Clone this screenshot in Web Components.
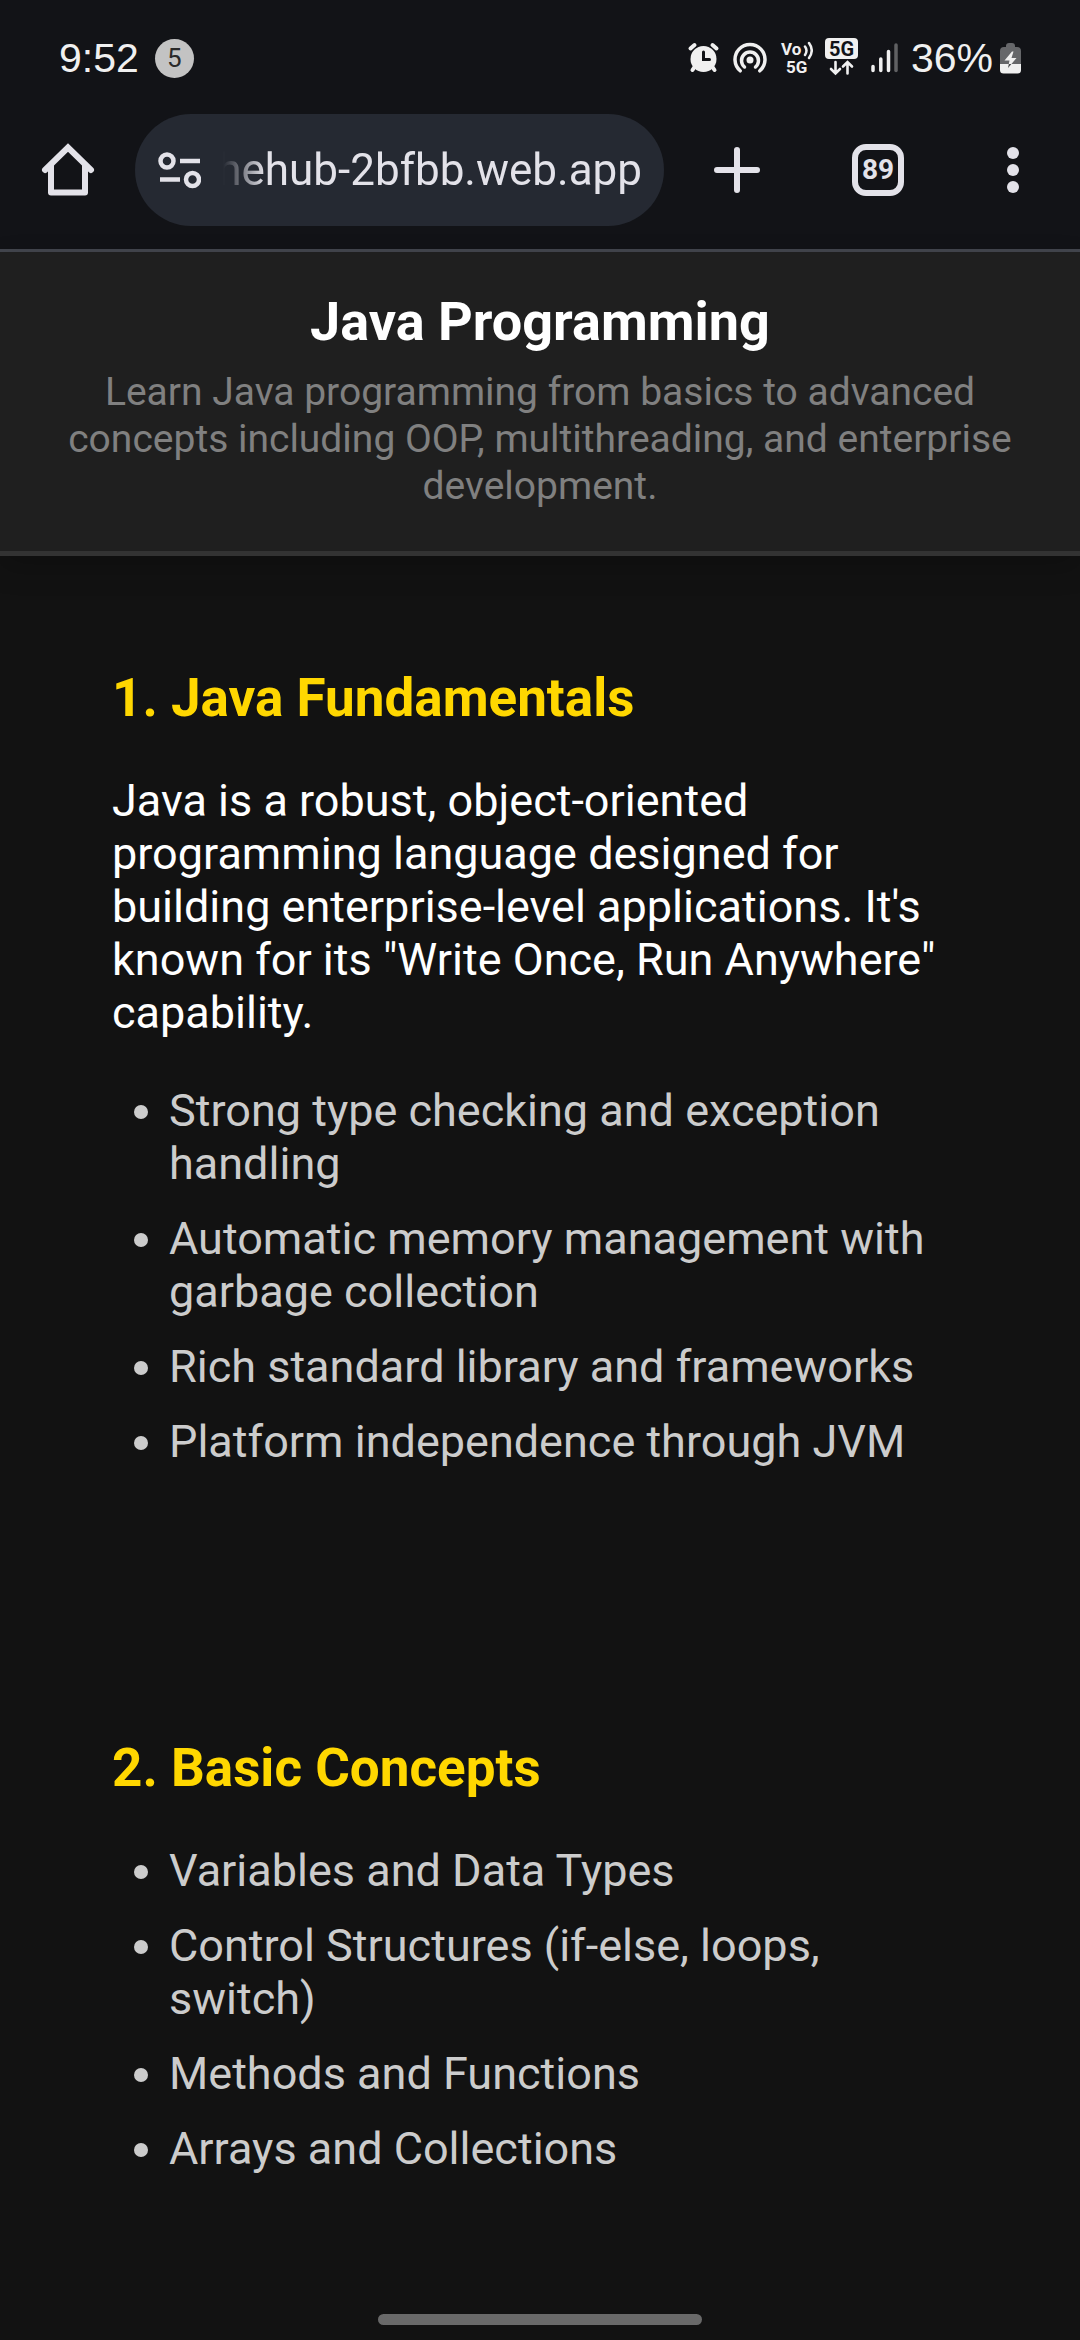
<!DOCTYPE html>
<html lang="en">
<head>
<meta charset="utf-8">
<meta name="viewport" content="width=device-width">
<title>Java Programming</title>
<style>
  html, body { margin: 0; background: #121212; }
  body { font-family: Roboto, "Liberation Sans", sans-serif; color: #fff; }
</style>
</head>
<body>
<phone-shell>
  <status-bar slot="top" time="9:52" count="5" battery="36%"></status-bar>
  <browser-toolbar slot="top" url="hehub-2bfbb.web.app" tabs="89"></browser-toolbar>
  <course-header>
    <span slot="title">Java Programming</span>
    <span slot="summary">Learn Java programming from basics to advanced concepts including OOP, multithreading, and enterprise development.</span>
  </course-header>
  <course-section>
    <span slot="title">1. Java Fundamentals</span>
    <course-text>Java is a robust, object-oriented programming language designed for building enterprise-level applications. It's known for its "Write Once, Run Anywhere" capability.</course-text>
    <topic-list items="Strong type checking and exception handling|Automatic memory management with garbage collection|Rich standard library and frameworks|Platform independence through JVM"></topic-list>
  </course-section>
  <course-section>
    <span slot="title">2. Basic Concepts</span>
    <topic-list items="Variables and Data Types|Control Structures (if-else, loops, switch)|Methods and Functions|Arrays and Collections"></topic-list>
  </course-section>
</phone-shell>

<script>
class BaseElement extends HTMLElement {
  connectedCallback() {
    if (this.shadowRoot) return;
    this.attachShadow({ mode: 'open' }).innerHTML = this.view();
  }
}

customElements.define('phone-shell', class extends BaseElement {
  view() {
    return `
    <style>
      :host { display: flex; flex-direction: column; min-height: 100vh; background: #121212; }
      /* The gesture handle floats over the scrolling page. */
      .handle { position: fixed; left: 35%; right: 35%; bottom: 15px; height: 11px; border-radius: 6px; background: #696969; }
    </style>
    <slot name="top"></slot>
    <main><slot></slot></main>
    <div class="handle"></div>`;
  }
});

customElements.define('status-bar', class extends BaseElement {
  view() {
    return `
    <style>
      :host { display: flex; align-items: center; justify-content: space-between; height: 106px; padding: 10px 59px 0; box-sizing: border-box; background: #121317; color: #f0f0f0; font: 41px/48px "Liberation Sans", sans-serif; }
      .group { display: flex; align-items: center; gap: 12px; }
      .lead { gap: 16px; }
      .power { display: flex; align-items: center; gap: 7px; }
      .badge { width: 39px; height: 39px; border-radius: 50%; background: #c3c3c3; color: #2a2a2a; font: 26px/39px Roboto, sans-serif; text-align: center; }
      svg { display: block; font-family: Roboto, sans-serif; font-weight: 700; }
    </style>
    <div class="group lead"><span>${this.getAttribute('time')}</span><span class="badge">${this.getAttribute('count')}</span></div>
    <div class="group">
      <svg width="33" height="40" viewBox="0 0 33 40" fill="none" stroke="#f0f0f0" stroke-linecap="round">
        <circle cx="16.500" cy="21" r="13" fill="#f0f0f0" stroke="none"/>
        <path d="M3.500 10.500 7.500 7M29.500 10.500 25.500 7M7.500 29 5.500 32M25.500 29 27.500 32" stroke-width="4"/>
        <path d="M16.500 14v7.500h6" stroke="#121317" stroke-width="3"/>
      </svg>
      <svg width="36" height="40" viewBox="0 0 36 40" fill="none" stroke="#f0f0f0" stroke-linecap="round">
        <circle cx="18" cy="22" r="3.500" fill="#f0f0f0" stroke="none"/>
        <path d="M12.500 29A8.500 8.500 0 1 1 23.500 29" stroke-width="3.500"/>
        <path d="M8.200 32.800A15 15 0 1 1 27.800 32.800" stroke-width="3.500"/>
      </svg>
      <svg width="33" height="40" viewBox="0 0 33 40" fill="#f0f0f0">
        <text x="1" y="17" font-size="17">Vo</text>
        <text x="6" y="35" font-size="17">5G</text>
        <path d="M25 8.500q3 4 0 8.500M29 5q5.500 7.500 0 15" fill="none" stroke="#f0f0f0" stroke-width="2.500" stroke-linecap="round"/>
      </svg>
      <svg width="34" height="40" viewBox="0 0 34 40">
        <rect x="0" y="0" width="33" height="21" rx="4" fill="#f0f0f0"/>
        <text x="16.500" y="17.500" font-size="20" text-anchor="middle" fill="#121317">5G</text>
        <path d="M10.500 24v11M6 31l4.500 4.500L15 31M22.500 35.500v-11M18 28.500l4.500-4.500 4.500 4.500" fill="none" stroke="#f0f0f0" stroke-width="2.600" stroke-linecap="round"/>
      </svg>
      <svg width="28" height="40" viewBox="0 0 28 40" stroke-width="3.500" stroke-linecap="round" stroke="#f0f0f0">
        <path d="M2 28.500v4M9.800 21v11.500M17.500 13.500v19"/><path d="M25 7v25.500" stroke="#606163"/>
      </svg>
      <div class="power"><span>${this.getAttribute('battery')}</span>
      <svg width="21" height="40" viewBox="0 0 21 40">
        <path d="M6 8q0-3 3-3h3q3 0 3 3v1h2q4 0 4 4v14H0V13q0-4 4-4h2z" fill="#66676a"/>
        <path d="M0 26h21v6q0 3.500-3.500 3.500h-14Q0 35.500 0 32z" fill="#f0f0f0"/>
        <path d="M12 13.500 4.500 22.500h5L8 30l8.500-10h-5l2-6.500z" fill="#f0f0f0"/>
        <path d="M8.800 26 8 30l3.400-4z" fill="#4a4b4d"/>
      </svg></div>
    </div>`;
  }
});

customElements.define('browser-toolbar', class extends BaseElement {
  view() {
    return `
    <style>
      :host { display: flex; align-items: center; padding: 8px 0 23px; border-bottom: 3px solid #43464e; background: #121317; color: #e3e2e9; }
      button { border: 0; padding: 0; margin: 0; background: none; color: inherit; font: inherit; height: 84px; display: flex; align-items: center; justify-content: center; }
      .home { width: 135px; }
      .pill { flex: 1; min-width: 0; height: 112px; border-radius: 56px; background: #252932; display: flex; align-items: center; gap: 12px; padding: 0 22px; }
      .pill button { height: 60px; }
      input { flex: 1; min-width: 0; border: 0; padding: 0; background: none; outline: 0; color: inherit; font: 44px/56px Roboto, sans-serif; text-align: right;
        -webkit-mask-image: linear-gradient(90deg, transparent 10px, #000 52px); mask-image: linear-gradient(90deg, transparent 10px, #000 52px); }
      .add { width: 146px; }
      .tabs { width: 136px; }
      .menu { width: 134px; }
      .count { width: 52px; height: 52px; box-sizing: border-box; border: 6px solid; border-radius: 14px; font: 700 28px/40px Roboto, sans-serif; text-align: center; display: block; }
      svg { display: block; }
    </style>
    <button class="home" aria-label="Home"><svg width="54" height="54" viewBox="0 0 54 54" fill="none" stroke="currentColor" stroke-width="6" stroke-linecap="round" stroke-linejoin="round"><path d="M4 27 27 4.500 50 27" stroke-linejoin="miter"/><path d="M10 22v27.500h34V22"/></svg></button>
    <div class="pill">
      <button aria-label="Site information"><svg width="44" height="38" viewBox="0 0 44 38" fill="none" stroke="currentColor" stroke-width="4.500"><circle cx="10" cy="10" r="6.500"/><circle cx="35.500" cy="28.500" r="6.500"/><path d="M23 10h20M3 28.500h20"/></svg></button>
      <input aria-label="Address" value="${this.getAttribute('url')}">
    </div>
    <button class="add" aria-label="New tab"><svg width="46" height="46" viewBox="0 0 46 46" stroke="currentColor" stroke-width="6" stroke-linecap="round"><path d="M23 3v40M3 23h40"/></svg></button>
    <button class="tabs" aria-label="Open tabs"><span class="count">${this.getAttribute('tabs')}</span></button>
    <button class="menu" aria-label="Menu"><svg width="12" height="46" viewBox="0 0 12 46" fill="currentColor"><circle cx="6" cy="6" r="6"/><circle cx="6" cy="23" r="6"/><circle cx="6" cy="40" r="6"/></svg></button>`;
  }
});

customElements.define('course-header', class extends BaseElement {
  view() {
    return `
    <style>
      :host { display: block; padding: 38px 45px 41px; background: #1f1f1f; border-bottom: 5px solid #333; box-shadow: 0 11px 28px rgba(0,0,0,.2); text-align: center; }
      h1 { margin: 0 0 15px; font-size: 54px; line-height: 64px; font-weight: 700; }
      p { margin: 0; font-size: 39px; line-height: 47px; color: #808080; }
    </style>
    <h1><slot name="title"></slot></h1>
    <p><slot name="summary"></slot></p>`;
  }
});

customElements.define('course-section', class extends BaseElement {
  view() {
    return `
    <style>
      :host { display: flex; flex-direction: column; gap: 45px; padding: 111px 112px 158px; }
      h2 { margin: 0; font-size: 53px; line-height: 62px; font-weight: 700; color: #ffd700; }
    </style>
    <h2><slot name="title"></slot></h2>
    <slot></slot>`;
  }
});

customElements.define('course-text', class extends BaseElement {
  view() {
    return `
    <style>
      :host { display: block; font-size: 45px; line-height: 53px; }
      p { margin: 0; }
    </style>
    <p><slot></slot></p>`;
  }
});

customElements.define('topic-list', class extends BaseElement {
  view() {
    const items = this.getAttribute('items').split('|').map(t => `<li>${t}</li>`).join('');
    return `
    <style>
      :host { display: block; font-size: 45px; line-height: 53px; color: #ccc; }
      ul { margin: 0; padding-left: 57px; }
      li + li { margin-top: 22px; }
    </style>
    <ul>${items}</ul>`;
  }
});
</script>
</body>
</html>
